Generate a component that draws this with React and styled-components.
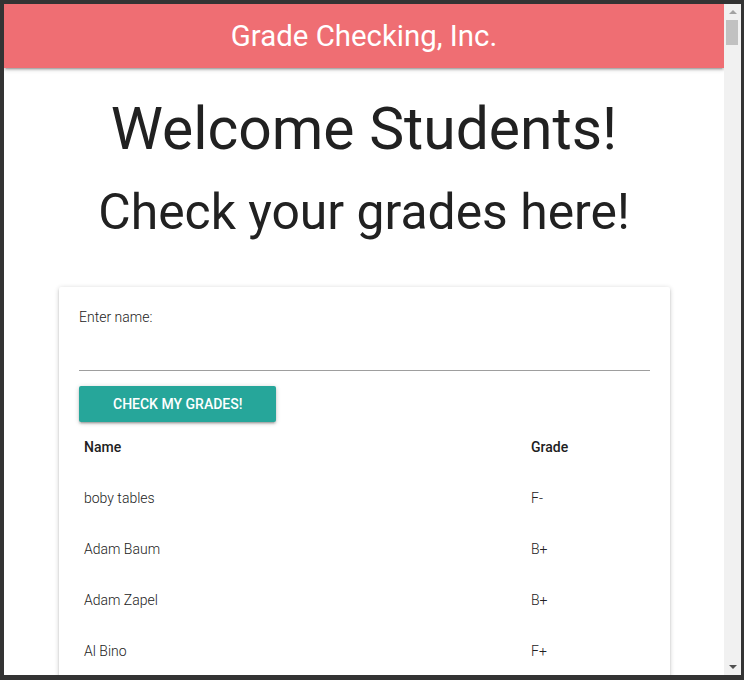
import React from "react";
import styled, { createGlobalStyle } from "styled-components";

const GlobalStyle = createGlobalStyle`
    html, body {
        margin: 0;
        padding: 0;
        overflow: hidden;
        background: #fff;
    }
    body {
        font-family: Roboto, "Liberation Sans", sans-serif;
        font-weight: 300;
        color: rgba(0, 0, 0, 0.87);
    }
`;

const Frame = styled.div`
    box-sizing: border-box;
    width: 744px;
    height: 680px;
    border-style: solid;
    border-color: #333;
    border-width: 4px 3px 5px 4px;
    display: flex;
`;

const Viewport = styled.div`
    flex: 1;
    min-width: 0;
    overflow: hidden;
    background: #fff;
`;

// the page's scroll bar, drawn as it appears in the window
const ScrollBar = styled.div`
    width: 17px;
    flex: none;
    background: #f1f1f1;
    display: flex;
    flex-direction: column;
`;

const ScrollButton = styled.div`
    height: 16px;
    display: flex;
    align-items: center;
    justify-content: center;
    padding-left: 1px;
`;

const Track = styled.div`
    flex: 1;
    padding: 0 3px 0 2px;
`;

const Thumb = styled.div`
    height: 25px;
    background: #c1c1c1;
`;

const Arrow = ({ down, color }) => (
    <svg width="8" height="4" viewBox="0 0 8 4">
        <polygon points={down ? "0,0 8,0 4,4" : "0,4 8,4 4,0"} fill={color} />
    </svg>
);

const Nav = styled.nav`
    height: 64px;
    line-height: 64px;
    background-color: #ef6e73;
    color: #fff;
    text-align: center;
    box-shadow: 0 2px 2px 0 rgba(0, 0, 0, 0.14), 0 3px 1px -2px rgba(0, 0, 0, 0.12),
        0 1px 5px 0 rgba(0, 0, 0, 0.2);
    position: relative;
    z-index: 1;
`;

const Brand = styled.span`
    font-size: 29.4px;
    font-weight: 400;
`;

const Main = styled.main`
    text-align: center;
    padding-top: 1px;
`;

const Title = styled.h1`
    font-size: 58.8px;
    font-weight: 400;
    line-height: 1.1;
    color: #212121;
    margin: 28px 0 23px;
`;

const Subtitle = styled.h2`
    font-size: 49.84px;
    font-weight: 400;
    line-height: 1.1;
    color: #212121;
    margin: 0 0 47px;
`;

const Container = styled.div`
    margin: 0 54px 0 55px;
    text-align: left;
`;

const Card = styled.div`
    background: #fff;
    border-radius: 2px;
    padding: 20px;
    box-shadow: 0 2px 2px 0 rgba(0, 0, 0, 0.14), 0 3px 1px -2px rgba(0, 0, 0, 0.12),
        0 1px 5px 0 rgba(0, 0, 0, 0.2);
`;

const Label = styled.label`
    display: block;
    font-size: 14px;
    line-height: 21px;
    color: #222;
`;

const Input = styled.input`
    display: block;
    box-sizing: border-box;
    width: 100%;
    height: 43px;
    margin: 0 0 15px;
    padding: 0;
    border: none;
    border-bottom: 1px solid #9e9e9e;
    outline: none;
    background: transparent;
    font: inherit;
    font-size: 15px;
`;

const Button = styled.button`
    display: inline-block;
    height: 36px;
    line-height: 36px;
    padding: 0 34px;
    border: none;
    border-radius: 2px;
    background-color: #26a69a;
    color: #fff;
    font-family: Roboto, "Liberation Sans", sans-serif;
    font-size: 14px;
    font-weight: 500;
    text-transform: uppercase;
    cursor: pointer;
    box-shadow: 0 2px 2px 0 rgba(0, 0, 0, 0.14), 0 3px 1px -2px rgba(0, 0, 0, 0.12),
        0 1px 5px 0 rgba(0, 0, 0, 0.2);
`;

const Table = styled.table`
    width: 100%;
    border-collapse: collapse;
    font-size: 14px;
    line-height: 21px;
`;

const Cell = styled.td`
    padding: 15px 5px;
    text-align: left;
    color: #222;
    width: ${(props) => (props.wide ? "437px" : "auto")};
`;

const HeadCell = styled.th`
    padding: 15px 5px;
    text-align: left;
    font-weight: 500;
    color: #212121;
    width: ${(props) => (props.wide ? "437px" : "auto")};
`;

const students = [
    { name: "boby tables", grade: "F-" },
    { name: "Adam Baum", grade: "B+" },
    { name: "Adam Zapel", grade: "B+" },
    { name: "Al Bino", grade: "F+" },
];

export default function App() {
    return (
        <>
            <GlobalStyle />
            <Frame>
                <Viewport>
                    <Nav>
                        <Brand>Grade Checking, Inc.</Brand>
                    </Nav>
                    <Main>
                        <Title>Welcome Students!</Title>
                        <Subtitle>Check your grades here!</Subtitle>
                        <Container>
                            <Card>
                                <Label htmlFor="name">Enter name:</Label>
                                <Input id="name" type="text" />
                                <Button>Check my grades!</Button>
                                <Table>
                                    <thead>
                                        <tr>
                                            <HeadCell wide>Name</HeadCell>
                                            <HeadCell>Grade</HeadCell>
                                        </tr>
                                    </thead>
                                    <tbody>
                                        {students.map((s, i) => (
                                            <tr key={i}>
                                                <Cell wide>{s.name}</Cell>
                                                <Cell>{s.grade}</Cell>
                                            </tr>
                                        ))}
                                    </tbody>
                                </Table>
                            </Card>
                        </Container>
                    </Main>
                </Viewport>
                <ScrollBar>
                    <ScrollButton>
                        <Arrow color="#a3a3a3" />
                    </ScrollButton>
                    <Track>
                        <Thumb />
                    </Track>
                    <ScrollButton>
                        <Arrow down color="#505050" />
                    </ScrollButton>
                </ScrollBar>
            </Frame>
        </>
    );
}
